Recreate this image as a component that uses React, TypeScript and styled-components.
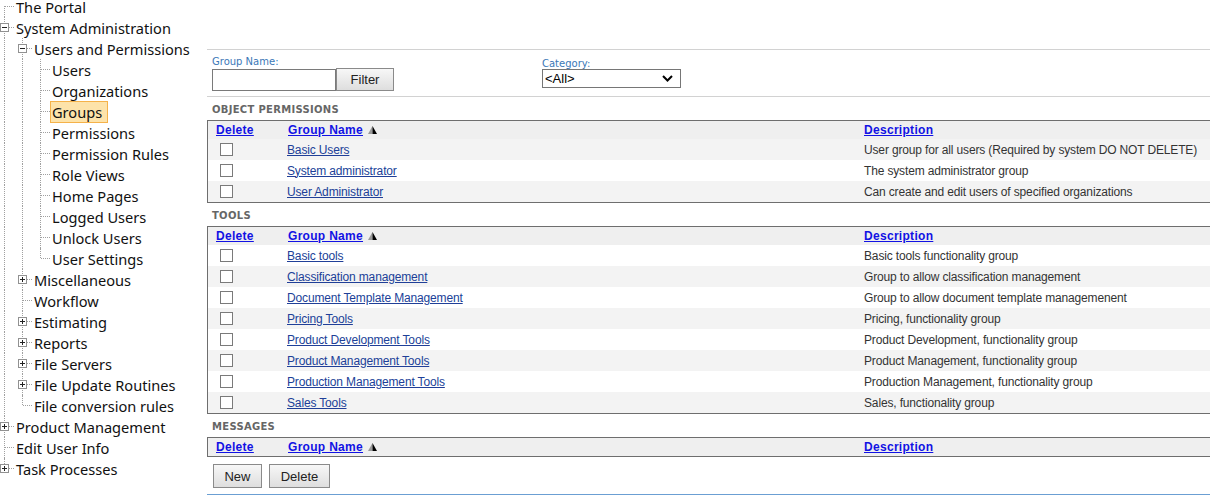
import React from 'react'
import styled, { createGlobalStyle, css } from 'styled-components'

const GlobalStyle = createGlobalStyle`
  html, body {
    margin: 0;
    padding: 0;
    background: #fff;
    overflow: hidden;
  }
  body {
    font-family: 'Liberation Sans', Arial, sans-serif;
  }
`

type Expand = 'plus' | 'minus'

interface TreeNode {
  label: string
  expand?: Expand
  selected?: boolean
  children?: TreeNode[]
}

const leaves = (labels: string[], selected?: string): TreeNode[] =>
  labels.map((label) => ({ label, selected: label === selected }))

const tree: TreeNode[] = [
  { label: 'The Portal' },
  {
    label: 'System Administration',
    expand: 'minus',
    children: [
      {
        label: 'Users and Permissions',
        expand: 'minus',
        children: leaves(
          [
            'Users',
            'Organizations',
            'Groups',
            'Permissions',
            'Permission Rules',
            'Role Views',
            'Home Pages',
            'Logged Users',
            'Unlock Users',
            'User Settings',
          ],
          'Groups'
        ),
      },
      { label: 'Miscellaneous', expand: 'plus' },
      { label: 'Workflow' },
      { label: 'Estimating', expand: 'plus' },
      { label: 'Reports', expand: 'plus' },
      { label: 'File Servers', expand: 'plus' },
      { label: 'File Update Routines', expand: 'plus' },
      { label: 'File conversion rules' },
    ],
  },
  { label: 'Product Management', expand: 'plus' },
  { label: 'Edit User Info' },
  { label: 'Task Processes', expand: 'plus' },
]

type Pos = 'top' | 'mid' | 'end'

interface FlatRow extends TreeNode {
  guides: boolean[]
  pos: Pos
}

const flatten = (nodes: TreeNode[], guides: boolean[], root: boolean, out: FlatRow[] = []) => {
  nodes.forEach((node, i) => {
    const last = i === nodes.length - 1
    const pos: Pos = root && i === 0 ? 'top' : last ? 'end' : 'mid'
    out.push({ ...node, guides, pos })
    if (node.children && node.expand === 'minus') {
      flatten(node.children, [...guides, !last], false, out)
    }
  })
  return out
}

const treeRows = flatten(tree, [], true)

// ---------- tree ----------

const Page = styled.div`
  display: flex;
  align-items: flex-start;
  width: 1210px;
  height: 496px;
  overflow: hidden;
`

const Sidebar = styled.div`
  width: 207px;
  flex: none;
  margin-top: -4px;
`

const TreeRow = styled.div`
  display: flex;
  align-items: center;
  height: 21px;
`

const dotted = '1px dotted #a0a0a0'

const Guide = styled.div<{ $show: boolean }>`
  position: relative;
  width: 18px;
  height: 21px;
  flex: none;
  ${(p) =>
    p.$show &&
    css`
      &::before {
        content: '';
        position: absolute;
        left: 4px;
        top: 0;
        bottom: 0;
        border-left: ${dotted};
      }
    `}
`

const Connector = styled.div<{ $pos: Pos }>`
  position: relative;
  width: 16px;
  height: 21px;
  flex: none;

  &::before {
    content: '';
    position: absolute;
    left: 4px;
    top: ${(p) => (p.$pos === 'top' ? '10px' : '0')};
    bottom: ${(p) => (p.$pos === 'end' ? '11px' : '0')};
    border-left: ${dotted};
  }

  &::after {
    content: '';
    position: absolute;
    left: 5px;
    width: 9px;
    top: 10px;
    border-top: ${dotted};
  }
`

const ExpanderBox = styled.svg`
  position: absolute;
  left: 0;
  top: 6px;
  z-index: 1;
`

const Expander = ({ kind }: { kind: Expand }) => (
  <ExpanderBox width="9" height="9" viewBox="0 0 9 9">
    <rect x="0.5" y="0.5" width="8" height="8" fill="#fff" stroke="#919191" />
    <path d="M2 4.5h5" stroke="#222" />
    {kind === 'plus' && <path d="M4.5 2v5" stroke="#222" />}
  </ExpanderBox>
)

const TreeLabel = styled.span<{ $selected?: boolean }>`
  font-family: 'Noto Sans', 'Open Sans', sans-serif;
  font-size: 14.6px;
  color: #111;
  white-space: nowrap;
  line-height: 20px;
  ${(p) =>
    p.$selected &&
    css`
      margin-left: -2px;
      padding: 0 5px 0 1px;
      border: 1px solid #f5b24a;
      background: #fde3aa;
    `}
`

const Tree = () => (
  <Sidebar>
    {treeRows.map((row) => (
      <TreeRow key={row.label}>
        {row.guides.map((show, i) => (
          <Guide key={i} $show={show} />
        ))}
        <Connector $pos={row.pos}>{row.expand && <Expander kind={row.expand} />}</Connector>
        <TreeLabel $selected={row.selected}>{row.label}</TreeLabel>
      </TreeRow>
    ))}
  </Sidebar>
)

// ---------- main panel ----------

const Main = styled.div`
  flex: 1;
  min-width: 0;
  padding-top: 49px;
`

const FilterBar = styled.div`
  display: flex;
  align-items: flex-start;
  height: 46px;
  padding-left: 5px;
  border-top: 1px solid #d2d2d2;
  border-bottom: 1px solid #d2d2d2;
`

const Field = styled.div<{ $width?: number; $offset?: number }>`
  display: flex;
  flex-direction: column;
  width: ${(p) => (p.$width ? `${p.$width}px` : 'auto')};
  padding-top: ${(p) => p.$offset ?? 6}px;
`

const FieldLabel = styled.label<{ $lh?: number }>`
  font-family: 'DejaVu Sans', Verdana, sans-serif;
  font-size: 10px;
  line-height: ${(p) => p.$lh ?? 12}px;
  color: #3b78b7;
`

const Controls = styled.div`
  display: flex;
  align-items: center;
`

const TextInput = styled.input`
  box-sizing: border-box;
  width: 124px;
  height: 22px;
  margin: 0;
  border: 1px solid #7a7a7a;
  font: 13px 'Liberation Sans', Arial, sans-serif;
`

const Button = styled.button<{ $w?: number; $h?: number }>`
  box-sizing: border-box;
  height: ${(p) => p.$h ?? 24}px;
  width: ${(p) => (p.$w ? `${p.$w}px` : 'auto')};
  padding: 0;
  margin: 0;
  border: 1px solid #8a8a8a;
  border-radius: 0;
  background: linear-gradient(#f7f7f7, #dedede);
  font: 13px 'Liberation Sans', Arial, sans-serif;
  color: #222;
`

const SelectBox = styled.div`
  box-sizing: border-box;
  display: flex;
  align-items: center;
  width: 139px;
  height: 19px;
  border: 1px solid #767676;
  background: #fff;
  padding-right: 7px;

  select {
    flex: 1;
    appearance: none;
    border: 0;
    outline: 0;
    background: transparent;
    padding: 0 0 0 2px;
    font: 13px 'Liberation Sans', Arial, sans-serif;
    color: #000;
  }
`

const Chevron = () => (
  <svg width="11" height="7" viewBox="0 0 11 7">
    <path d="M1 1l4.5 4.5L10 1" fill="none" stroke="#000" strokeWidth="2" />
  </svg>
)

const SectionTitle = styled.div`
  padding: 7px 0 4px 5px;
  font-family: 'DejaVu Sans', Verdana, sans-serif;
  font-weight: bold;
  font-size: 10px;
  letter-spacing: 0.3px;
  line-height: 12px;
  color: #666;
`

const Grid = styled.div`
  border-top: 1px solid #6e6e6e;
  border-left: 1px solid #6e6e6e;
  border-bottom: 1px solid #6e6e6e;
`

const Row = styled.div<{ $head?: boolean; $shade?: boolean }>`
  display: grid;
  grid-template-columns: 79px 577px 1fr;
  align-items: center;
  height: ${(p) => (p.$head ? 18 : 21)}px;
  background: ${(p) => (p.$head ? '#efefef' : p.$shade ? '#f3f3f3' : '#fff')};
  font-family: 'Liberation Sans', Arial, sans-serif;
  font-size: 12px;
  letter-spacing: ${(p) => (p.$head ? 0.3 : -0.15)}px;
  color: #333;
  white-space: nowrap;
`

const HeadLink = styled.a`
  font-weight: bold;
  color: #1212e4;
  text-decoration: underline;
  cursor: pointer;
`

const HeadCell = styled.div<{ $pad?: number }>`
  display: flex;
  align-items: center;
  padding-left: ${(p) => p.$pad ?? 0}px;
`

const RowLink = styled.a`
  color: #203f98;
  text-decoration: underline;
  cursor: pointer;
`

const Check = styled.input.attrs({ type: 'checkbox' })`
  appearance: none;
  box-sizing: border-box;
  width: 13px;
  height: 13px;
  margin: 0 0 0 12px;
  border: 1px solid #7a7a7a;
  background: #fff;
  display: block;
`

const SortIcon = () => (
  <svg width="9" height="8" viewBox="0 0 9 8" style={{ marginLeft: 5 }}>
    <polygon points="0,8 4.5,0 4.5,8" fill="#9a9a9a" />
    <polygon points="4.5,0 9,8 4.5,8" fill="#000" />
  </svg>
)

const ButtonBar = styled.div`
  display: flex;
  gap: 7px;
  padding: 7px 0 0 6px;
`

const BottomRule = styled.div`
  margin-top: 6px;
  border-top: 1px solid #6b9fd3;
`

interface Group {
  name: string
  description: string
}

const objectPermissions: Group[] = [
  { name: 'Basic Users', description: 'User group for all users (Required by system DO NOT DELETE)' },
  { name: 'System administrator', description: 'The system administrator group' },
  { name: 'User Administrator', description: 'Can create and edit users of specified organizations' },
]

const tools: Group[] = [
  { name: 'Basic tools', description: 'Basic tools functionality group' },
  { name: 'Classification management', description: 'Group to allow classification management' },
  { name: 'Document Template Management', description: 'Group to allow document template managemenent' },
  { name: 'Pricing Tools', description: 'Pricing, functionality group' },
  { name: 'Product Development Tools', description: 'Product Development, functionality group' },
  { name: 'Product Management Tools', description: 'Product Management, functionality group' },
  { name: 'Production Management Tools', description: 'Production Management, functionality group' },
  { name: 'Sales Tools', description: 'Sales, functionality group' },
]

const GroupTable = ({ title, groups, shadeFirst }: { title: string; groups: Group[]; shadeFirst?: boolean }) => (
  <>
    <SectionTitle>{title}</SectionTitle>
    <Grid>
      <Row $head>
        <HeadCell $pad={8}>
          <HeadLink>Delete</HeadLink>
        </HeadCell>
        <HeadCell $pad={1}>
          <HeadLink>Group Name</HeadLink>
          <SortIcon />
        </HeadCell>
        <HeadCell>
          <HeadLink>Description</HeadLink>
        </HeadCell>
      </Row>
      {groups.map((g, i) => (
        <Row key={g.name} $shade={(i % 2 === 0) === !!shadeFirst}>
          <div>
            <Check />
          </div>
          <div>
            <RowLink>{g.name}</RowLink>
          </div>
          <div>{g.description}</div>
        </Row>
      ))}
    </Grid>
  </>
)

const App = () => (
  <>
    <GlobalStyle />
    <Page>
      <Tree />
      <Main>
        <FilterBar>
          <Field $width={330}>
            <FieldLabel>Group Name:</FieldLabel>
            <Controls>
              <TextInput />
              <Button $w={58} $h={23}>
                Filter
              </Button>
            </Controls>
          </Field>
          <Field $offset={9}>
            <FieldLabel $lh={10}>Category:</FieldLabel>
            <SelectBox>
              <select defaultValue="all">
                <option value="all">&lt;All&gt;</option>
              </select>
              <Chevron />
            </SelectBox>
          </Field>
        </FilterBar>
        <GroupTable title="OBJECT PERMISSIONS" groups={objectPermissions} shadeFirst />
        <GroupTable title="TOOLS" groups={tools} />
        <GroupTable title="MESSAGES" groups={[]} />
        <ButtonBar>
          <Button $w={49}>New</Button>
          <Button $w={61}>Delete</Button>
        </ButtonBar>
        <BottomRule />
      </Main>
    </Page>
  </>
)

export default App
